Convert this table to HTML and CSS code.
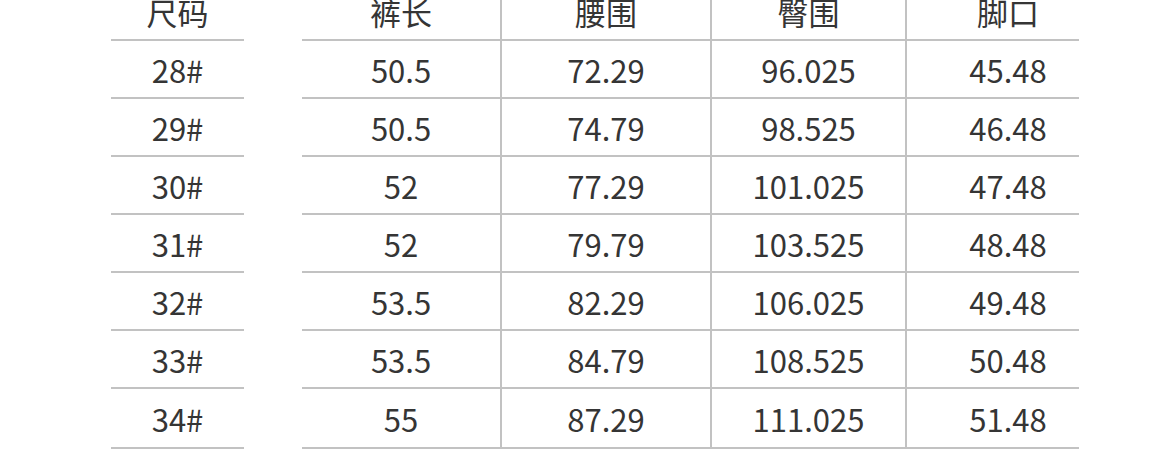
FILE: index.html
```html
<!DOCTYPE html>
<html lang="zh">
<head>
<meta charset="utf-8">
<link rel="stylesheet" href="styles.css">
</head>
<body>
<div class="table">
  <div class="row head">
    <div class="cell c1">尺码</div><div class="gap"></div>
    <div class="cell c2">裤长</div><div class="cell c3">腰围</div><div class="cell c4">臀围</div><div class="cell c5">脚口</div>
  </div>
  <div class="row">
    <div class="cell c1">28#</div><div class="gap"></div>
    <div class="cell c2">50.5</div><div class="cell c3">72.29</div><div class="cell c4">96.025</div><div class="cell c5">45.48</div>
  </div>
  <div class="row">
    <div class="cell c1">29#</div><div class="gap"></div>
    <div class="cell c2">50.5</div><div class="cell c3">74.79</div><div class="cell c4">98.525</div><div class="cell c5">46.48</div>
  </div>
  <div class="row">
    <div class="cell c1">30#</div><div class="gap"></div>
    <div class="cell c2">52</div><div class="cell c3">77.29</div><div class="cell c4">101.025</div><div class="cell c5">47.48</div>
  </div>
  <div class="row">
    <div class="cell c1">31#</div><div class="gap"></div>
    <div class="cell c2">52</div><div class="cell c3">79.79</div><div class="cell c4">103.525</div><div class="cell c5">48.48</div>
  </div>
  <div class="row">
    <div class="cell c1">32#</div><div class="gap"></div>
    <div class="cell c2">53.5</div><div class="cell c3">82.29</div><div class="cell c4">106.025</div><div class="cell c5">49.48</div>
  </div>
  <div class="row">
    <div class="cell c1">33#</div><div class="gap"></div>
    <div class="cell c2">53.5</div><div class="cell c3">84.79</div><div class="cell c4">108.525</div><div class="cell c5">50.48</div>
  </div>
  <div class="row last">
    <div class="cell c1">34#</div><div class="gap"></div>
    <div class="cell c2">55</div><div class="cell c3">87.29</div><div class="cell c4">111.025</div><div class="cell c5">51.48</div>
  </div>
</div>
</body>
</html>
```

FILE: styles.css
```css
html, body {
  margin: 0;
  padding: 0;
  background: #ffffff;
  overflow: hidden;
}
body {
  width: 1170px;
  height: 449px;
  font-family: "Noto Sans CJK SC", "Noto Sans", sans-serif;
  color: #353535;
}
.table {
  margin-top: -17px;
  padding-left: 111px;
}
.row {
  display: flex;
  height: 58px;
}
.cell {
  box-sizing: border-box;
  height: 58px;
  display: flex;
  align-items: center;
  justify-content: center;
  font-size: 31px;
  line-height: 1;
  border-bottom: 2px solid #c2c2c2;
}
.last .cell {
  height: 60px;
}
.gap {
  width: 58px;
}
.c1 { width: 133px; }
.c2 { width: 198px; }
.c3 { width: 210px; border-left: 2px solid #c2c2c2; }
.c4 { width: 195px; border-left: 2px solid #c2c2c2; }
.c5 { width: 174px; border-left: 2px solid #c2c2c2; padding-left: 30px; }
```
